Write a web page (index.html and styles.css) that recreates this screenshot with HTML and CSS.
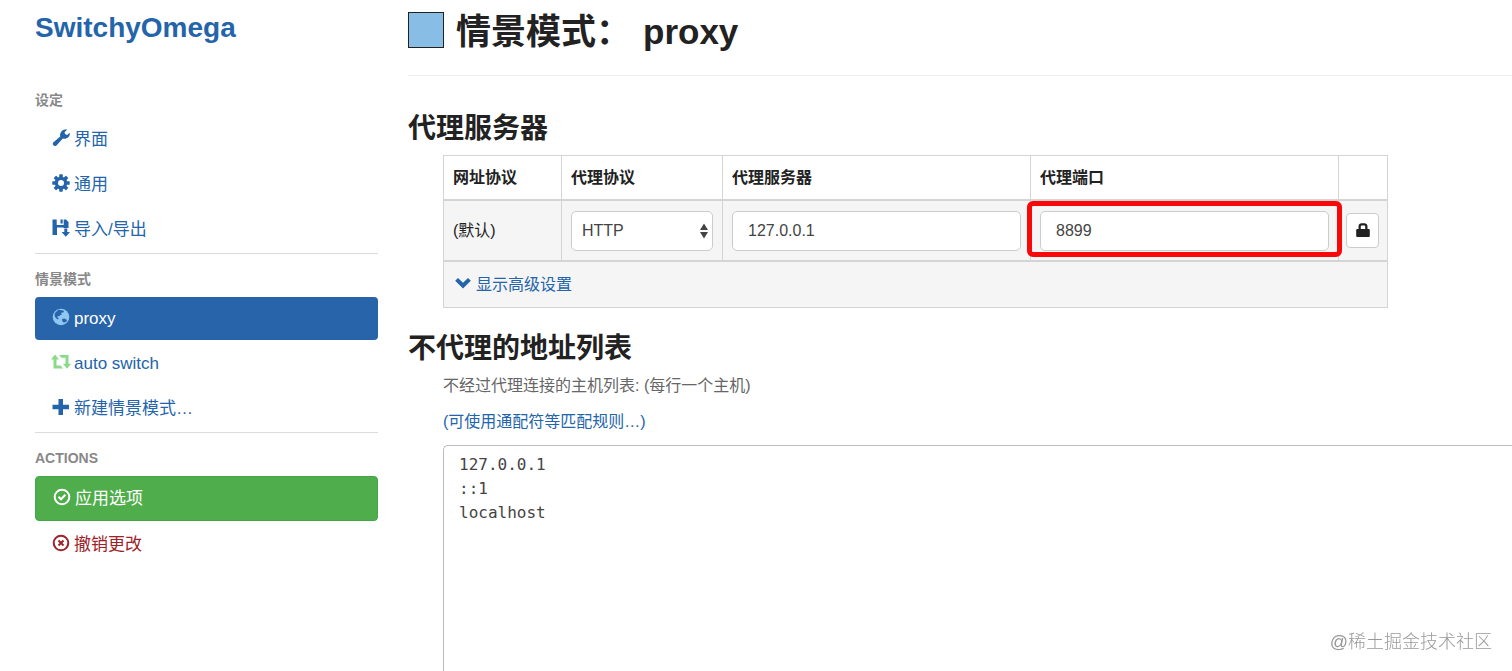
FILE: index.html
```html
<!DOCTYPE html>
<html lang="zh-CN">
<head>
    <meta charset="UTF-8">
    <meta name="viewport" content="width=device-width, initial-scale=1.0">
    <title>SwitchyOmega</title>
<link rel="stylesheet" href="styles.css">
</head>
<body>

<div class="page">
  <aside class="sidebar">
    <h1 class="brand"><a href="#about">SwitchyOmega</a></h1>

    <nav>
      <h2 class="nav-header">设定</h2>
      <ul class="nav">
        <li><a href="#ui">
          <svg class="icon" viewBox="0 0 18 18" aria-hidden="true"><path d="M1.200 13.600 8.200 7.600C7.600 4.500 9.600 1.100 12.700.6c1-.2 1.900-.1 2.500.2l-2.600 2.100.4 2.200 2.100.8 2.600-2.200c.7 2.900-1.400 5.600-4.300 6-1 .1-1.900 0-2.600-.3L4.500 16.400c-.8.8-2 .9-2.800.2-.9-.7-1.300-2-.5-3z"/></svg>
          界面</a></li>
        <li><a href="#general">
          <svg class="icon" viewBox="0 0 18 18" aria-hidden="true">
            <g>
              <rect x="7.200" y=".3" width="3.600" height="17.400" rx=".6"/>
              <rect x="7.200" y=".3" width="3.600" height="17.400" rx=".6" transform="rotate(45 9 9)"/>
              <rect x="7.200" y=".3" width="3.600" height="17.400" rx=".6" transform="rotate(90 9 9)"/>
              <rect x="7.200" y=".3" width="3.600" height="17.400" rx=".6" transform="rotate(135 9 9)"/>
              <circle cx="9" cy="9" r="6.300"/>
            </g>
            <circle class="hole" cx="9" cy="9" r="3"/>
          </svg>
          通用</a></li>
        <li><a href="#io">
          <svg class="icon" viewBox="0 0 18 18" aria-hidden="true"><path d="M.5.500h4.200v5.500h7V.5h2.300L16.500 3v6h-5V8.500H5V16H.5zM8.500.5h2.200v4H8.500zM12.300 9.500h3V13H18l-4.200 4.800L9.600 13h2.700z"/></svg>
          导入/导出</a></li>
      </ul>

      <h2 class="nav-header">情景模式</h2>
      <ul class="nav">
        <li><a class="active" href="#profile-proxy">
          <svg class="icon icon-proxy" viewBox="0 0 18 18" aria-hidden="true"><circle cx="9" cy="9" r="8.300"/><path class="land" d="M6.500 1.500c1.500.2 2.500 1.100 4 .7l1.500.9-.6 1.400-1.600-.1-.7 1.300.7 1.200-1.500.2-1.200 1.100-1.300-.3-.6 1.400 1.400.8-.4 1.400-2.300-1.200-1.300-2.500.2-2.500zM10 11l2.500-.4 2.500 1.500-.8 2-2.700.5-1.300-1.500z"/></svg>
          proxy</a></li>
        <li><a href="#profile-auto">
          <svg class="icon icon-switch" viewBox="0 0 20 18" aria-hidden="true"><path d="M4 1.500 8 6.500H5.500v6h4l2.500 2.900H2.500V6.500H0zM16 15.800l-4-5h2.500v-6h-4L8 1.900h9.500v8.900H20z"/></svg>
          auto switch</a></li>
        <li><a href="#new-profile">
          <svg class="icon" viewBox="0 0 18 18" aria-hidden="true"><path d="M6.500 1h4.500v5.800h6v4.400h-6V17H6.500v-5.800h-6V6.800h6z"/></svg>
          新建情景模式…</a></li>
      </ul>

      <h2 class="nav-header">ACTIONS</h2>
      <ul class="nav">
        <li><button class="apply" type="button">
          <svg class="icon" viewBox="0 0 18 18" aria-hidden="true"><circle class="ring" cx="9" cy="9" r="7.300"/><path class="mark" d="M5.500 8.800 8 11.300l4.400-4.600"/></svg>
          应用选项</button></li>
        <li><a class="revert" href="#revert">
          <svg class="icon" viewBox="0 0 18 18" aria-hidden="true"><circle class="ring" cx="9" cy="9" r="7.300"/><path class="mark" d="m6.500 6.500 5 5m0-5-5 5"/></svg>
          撤销更改</a></li>
      </ul>
    </nav>
  </aside>

  <main class="content">
    <header class="page-header">
      <button class="color-picker" type="button" aria-label="颜色"></button>
      <h2>情景模式：<span class="profile-name">proxy</span></h2>
    </header>

    <section>
      <h3>代理服务器</h3>
      <table class="servers">
        <colgroup>
          <col class="col-scheme">
          <col class="col-protocol">
          <col class="col-field">
          <col class="col-field">
          <col class="col-auth">
        </colgroup>
        <thead>
          <tr>
            <th>网址协议</th>
            <th id="th-protocol">代理协议</th>
            <th id="th-server">代理服务器</th>
            <th id="th-port">代理端口</th>
            <th></th>
          </tr>
        </thead>
        <tbody>
          <tr>
            <td>(默认)</td>
            <td>
              <div class="select">
                <select class="form-control" aria-labelledby="th-protocol">
                  <option>HTTP</option>
                  <option>HTTPS</option>
                  <option>SOCKS4</option>
                  <option>SOCKS5</option>
                </select>
                <svg viewBox="0 0 8 16" aria-hidden="true"><path d="M4 .5l4 6.500H0zM0 9h8l-4 6.500z"/></svg>
              </div>
            </td>
            <td><input class="form-control" type="text" value="127.0.0.1" aria-labelledby="th-server"></td>
            <td>
              <div class="highlight">
                <input class="form-control" type="text" value="8899" aria-labelledby="th-port">
              </div>
            </td>
            <td class="auth">
              <button class="btn-lock" type="button" aria-label="代理登录">
                <svg viewBox="0 0 14 15" aria-hidden="true"><path d="M2.500 6V3.500C2.500 1.500 4 .3 5.500.3h3c1.500 0 3 1.200 3 3.200V6h1c.8 0 1.300.5 1.300 1.300v5.400c0 .8-.5 1.300-1.300 1.300h-11C.7 14 .2 13.500.2 12.700V7.300C.2 6.500.7 6 1.500 6zm2.300 0h4.400V3.500c0-.7-.4-1.100-1-1.100H5.800c-.6 0-1 .4-1 1.100z"/></svg>
              </button>
            </td>
          </tr>
        </tbody>
        <tfoot>
          <tr>
            <td colspan="5">
              <a class="advanced" href="#advanced">
                <svg viewBox="0 0 16 12" aria-hidden="true"><path d="M3 1 8 5.800 13 1l2.800 2.800L8 11.400.2 3.800z"/></svg>
                显示高级设置</a>
            </td>
          </tr>
        </tfoot>
      </table>
    </section>

    <section class="bypass">
      <h3>不代理的地址列表</h3>
      <p><label for="bypass-list">不经过代理连接的主机列表: (每行一个主机)</label></p>
      <p><a href="#patterns">(可使用通配符等匹配规则…)</a></p>
      <textarea id="bypass-list" spellcheck="false">127.0.0.1
::1
localhost</textarea>
    </section>
  </main>
</div>

<div class="watermark">@稀土掘金技术社区</div>

</body>
</html>
```
FILE: styles.css
```css
* { box-sizing: border-box }

body {
  margin: 0;
  background: #fff;
  color: #222;
  font-family: "Liberation Sans", "Noto Sans CJK SC", sans-serif;
  font-size: 16px;
  line-height: 24px;
}

a {
  color: #2364aa;
  text-decoration: none;
}

h1, h2, h3, p, ul {
  margin: 0;
  padding: 0;
}

button, input, select, textarea {
  font: inherit;
}

svg { fill: currentColor }

.page {
  display: grid;
  grid-template-columns: 25% minmax(0, 1fr);
  min-height: 100vh;
}

/* Sidebar */

.sidebar {
  padding: 12px 0 0 35px;
}

.brand {
  margin-bottom: 48px;
  font-size: 28px;
  line-height: 32px;
}

.nav-header {
  margin-bottom: 10px;
  color: #888;
  font-size: 14px;
  line-height: 16px;
}

.nav {
  display: flex;
  flex-direction: column;
  gap: 2px;
  list-style: none;
}

.nav + .nav-header {
  margin-top: 2px;
  padding-top: 17px;
  border-top: 1px solid #ddd;
}

.nav a,
.apply {
  display: flex;
  align-items: center;
  gap: 4px;
  width: 100%;
  height: 43px;
  padding: 0 17px;
  border-radius: 4px;
  font-size: 17px;
}

.nav a.active {
  background: #2764aa;
  color: #fff;
}

.apply {
  height: 45px;
  border: 1px solid #46a546;
  background: #4fae4b;
  color: #fff;
  cursor: pointer;
}

.nav a.revert { color: #9d2228 }

.icon {
  flex: none;
  width: 18px;
  height: 18px;
  margin-bottom: 3px;
}

.icon .hole { fill: #fff }

.icon .ring,
.icon .mark {
  fill: none;
  stroke: currentColor;
  stroke-width: 2;
}

.icon-proxy { color: #8fc7f2 }
.icon-proxy .land { fill: #2764aa }

/* wider than its slot, so it spills over evenly on both sides */
.icon-switch {
  width: 20px;
  margin: 0 -1px 3px;
  color: #8bd98b;
}

/* Content */

.content {
  display: flex;
  flex-direction: column;
  padding-left: 30px;
}

.page-header {
  display: flex;
  align-items: center;
  gap: 12px;
  margin-bottom: 32px;
  padding: 8px 0 19px;
  border-bottom: 1px solid #eee;
}

.page-header h2 {
  font-size: 35px;
  line-height: 48px;
}

.profile-name { margin-left: 12px }

.color-picker {
  width: 36px;
  height: 36px;
  margin-bottom: 4px;
  padding: 0;
  border: 1px solid #222;
  background: #88bde6;
}

h3 {
  font-size: 28px;
  line-height: 42px;
}

.servers {
  width: calc(100% - 36px);
  max-width: 945px;
  margin: 5px 0 20px 35px;
  border-collapse: collapse;
  table-layout: fixed;
}

.col-scheme { width: 118px }
.col-protocol { width: 161px }
.col-auth { width: 49px }

.servers th,
.servers td {
  padding: 10px 9px 9px;
  border: 1px solid #d4d4d4;
  text-align: left;
}

.servers th {
  height: 44px;
}

.servers tbody td {
  border-top-width: 2px;
  border-bottom-width: 2px;
}

.servers tbody,
.servers tfoot {
  background: #f5f5f5;
}

.servers tfoot td { height: 46px }

.form-control {
  display: block;
  width: 100%;
  height: 40px;
  padding: 0 15px;
  border: 1px solid #ccc;
  border-radius: 5px;
  background: #fff;
  color: #444;
}

.select { position: relative }

.select .form-control {
  padding: 0 10px;
  appearance: none;
}

.select svg {
  position: absolute;
  top: 12px;
  right: 5px;
  width: 8px;
  height: 16px;
  color: #444;
  pointer-events: none;
}

.highlight { position: relative }

.highlight::after {
  content: "";
  position: absolute;
  inset: -10px -13px -6px;
  border: 5px solid #f80808;
  border-radius: 6px;
  pointer-events: none;
}

.servers td.auth { padding: 0 7px }

.btn-lock {
  display: flex;
  align-items: center;
  justify-content: center;
  width: 33px;
  height: 35px;
  padding: 0;
  border: 1px solid #ccc;
  border-radius: 4px;
  background: #fff;
  color: #222;
}

.btn-lock svg {
  width: 14px;
  height: 15px;
}

.advanced {
  display: flex;
  align-items: center;
  gap: 5px;
}

.advanced svg {
  width: 16px;
  height: 12px;
  margin: 0 0 3px 2px;
}

.bypass {
  display: flex;
  flex: 1;
  flex-direction: column;
}

.bypass p {
  margin: 6px 0 6px 35px;
  color: #666;
}

.bypass h3 + p { margin-top: 4px }

.bypass textarea {
  flex: 1;
  min-height: 120px;
  margin: 5px 0 0 35px;
  padding: 7px 15px;
  border: solid #bbb;
  border-width: 1px 0 0 1px;
  border-radius: 5px 0 0 0;
  color: #444;
  font-family: "DejaVu Sans Mono", monospace;
  line-height: 24px;
  resize: none;
}

.watermark {
  position: fixed;
  right: 20px;
  bottom: 16px;
  color: #999;
  font-size: 18px;
  font-weight: 300;
  line-height: 26px;
}
```
